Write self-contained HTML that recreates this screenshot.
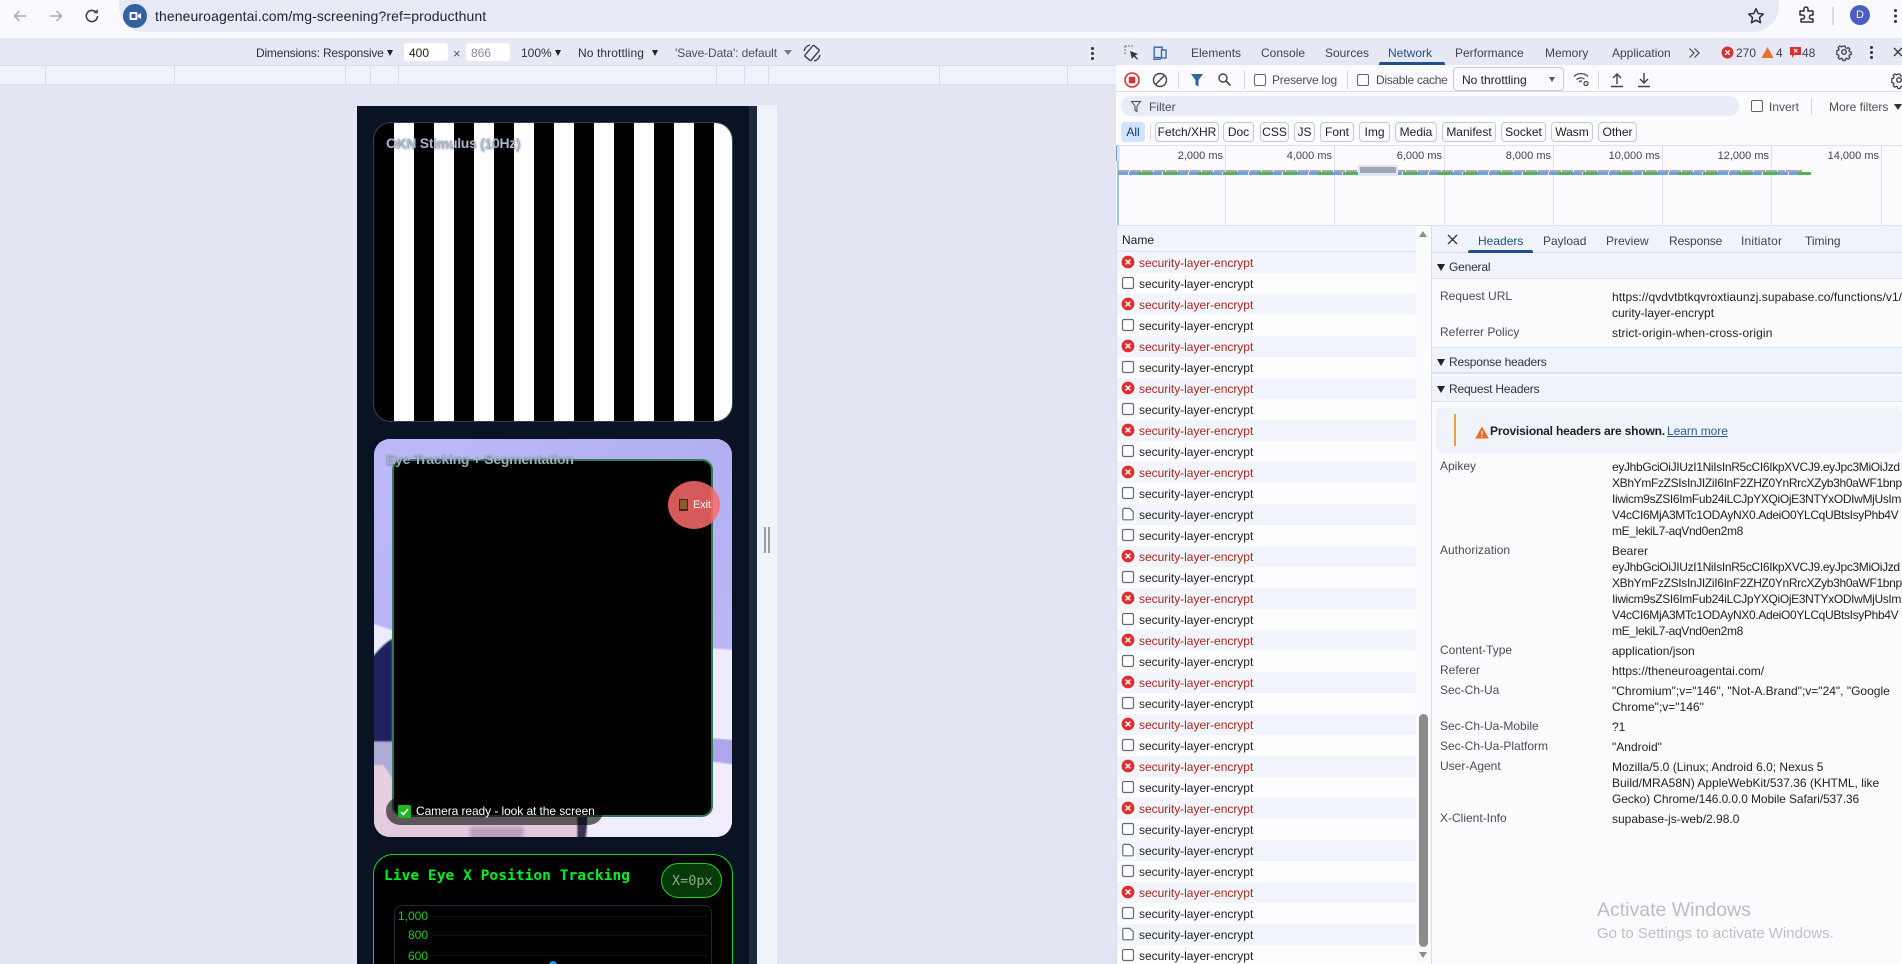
<!DOCTYPE html>
<html><head><meta charset="utf-8"><title>DevTools</title>
<style>
*{box-sizing:border-box}
html,body{margin:0;padding:0;width:1902px;height:964px;overflow:hidden;background:#e3e6f2;font:12px/16px "Liberation Sans",Arial,sans-serif;color:#1f1f1f}
#wrap{position:relative;width:1902px;height:964px;overflow:hidden}
.a{position:absolute}
.t{position:absolute;white-space:nowrap;font:12px/16px "Liberation Sans",Arial,sans-serif}
svg{position:absolute;overflow:visible}
.tab{color:#3c4350;top:45px}
.chip{position:absolute;top:122px;height:20px;border:1px solid #c7c9d3;border-radius:4px;background:#fbfbff;font-size:12px;line-height:18px;text-align:center;color:#1f1f1f;white-space:nowrap}
.ms{position:absolute;top:148px;font-size:11px;text-align:right;width:60px;color:#3c4350;line-height:16px}
.vl{position:absolute;top:145px;width:1px;height:80px;background:#dbe3f3}
.ml{position:absolute;top:65px;width:1px;height:20px;background:#d3def3}
#rows{position:absolute;left:1117px;top:252px;width:299px}
.r{position:relative;height:21px;background:#fdfdff;color:#1f1f1f;font-size:12px;line-height:23px;padding-left:22px;white-space:nowrap;letter-spacing:-.02px;overflow:hidden}
.r:nth-child(odd){background:#f2f5fb}
.r.e{color:#b3261e}
.r svg{left:4px;top:3px;width:14px;height:14px}
.lb{position:absolute;left:1440px;color:#474c55;white-space:nowrap;font-size:12px;line-height:16px}
.vv{position:absolute;left:1612px;width:290px;overflow:hidden;white-space:nowrap;font-size:12px;line-height:16px;color:#1f1f1f}
.tk{letter-spacing:-.34px}
.sec{position:absolute;left:1432px;width:470px;background:#f1f3fa;border-bottom:1px solid #d9e3f5;font-size:12px;color:#2d3340}
.sec span{position:absolute;left:17px;white-space:nowrap;letter-spacing:-.2px}
.sec i{position:absolute;left:5px;width:0;height:0;border-left:4px solid transparent;border-right:4px solid transparent;border-top:7px solid #222}
</style></head><body><div id="wrap">
<svg width="0" height="0" style="position:absolute"><defs>
<symbol id="err" viewBox="0 0 14 14"><circle cx="7" cy="7" r="6.4" fill="#dc2f2f"/><path d="M4.6 4.6l4.8 4.8M9.4 4.6l-4.8 4.8" stroke="#fff" stroke-width="1.5" fill="none"/></symbol>
<symbol id="box" viewBox="0 0 14 14"><rect x="1.5" y="1.5" width="11" height="11" rx="1.5" fill="#fff" stroke="#666b75" stroke-width="1.2"/></symbol>
<symbol id="doc" viewBox="0 0 14 14"><path d="M1.8 2.6a1.2 1.2 0 0 1 1.2-1.2h5.8l3.4 3.4v6.8a1.2 1.2 0 0 1-1.2 1.2H3a1.2 1.2 0 0 1-1.2-1.2z" fill="#fff" stroke="#666b75" stroke-width="1.2"/></symbol>
<filter id="bl"><feGaussianBlur stdDeviation="5"/></filter>
<filter id="bl2"><feGaussianBlur stdDeviation="2"/></filter>
</defs></svg>

<!-- chrome top -->
<div class="a" style="left:0;top:0;width:1902px;height:38px;background:#fafafe"></div>
<div class="a" style="left:119px;top:-20px;width:1660px;height:52px;border-radius:26px;background:#e7e9f5"></div>
<svg style="left:10px;top:6px" width="20" height="20" viewBox="0 0 20 20"><path d="M16 10H5M9.5 5L4.5 10l5 5" fill="none" stroke="#a8abb6" stroke-width="1.5"/></svg>
<svg style="left:46px;top:6px" width="20" height="20" viewBox="0 0 20 20"><path d="M4 10h11M10.5 5l5 5-5 5" fill="none" stroke="#a8abb6" stroke-width="1.5"/></svg>
<svg style="left:82px;top:6px" width="20" height="20" viewBox="0 0 20 20"><path d="M15.5 10a5.6 5.6 0 1 1-1.7-4" fill="none" stroke="#3e4249" stroke-width="1.6"/><path d="M15.8 3v4.2h-4.2z" fill="#3e4249"/></svg>
<svg style="left:123px;top:4px" width="24" height="24" viewBox="0 0 24 24"><circle cx="12" cy="12" r="12" fill="#33609f"/><rect x="6.5" y="8" width="8" height="8" rx="1.5" fill="#fff"/><path d="M15 11l3-2v6l-3-2z" fill="#fff"/><rect x="8.5" y="10" width="4" height="4" fill="#33609f"/></svg>
<div class="t" style="left:155px;top:7px;font-size:14px;line-height:18px;color:#1f2228;letter-spacing:.1px">theneuroagentai.com/mg-screening?ref=producthunt</div>
<svg style="left:1746px;top:6px" width="20" height="20" viewBox="0 0 20 20"><path d="M10 2.8l2.2 4.7 5.1.6-3.8 3.5 1 5.1L10 14.2l-4.5 2.5 1-5.1-3.8-3.5 5.1-.6z" fill="none" stroke="#2e3138" stroke-width="1.5" stroke-linejoin="round"/></svg>
<svg style="left:1797px;top:5px" width="20" height="20" viewBox="0 0 20 20"><path d="M3 7h4V5a2 2 0 0 1 4 0v2h5v4h-1.6a2 2 0 0 0 0 4H16v3H4v-3h1.5a2 2 0 0 0 0-4H3z" fill="none" stroke="#2e3138" stroke-width="1.5" stroke-linejoin="round" transform="translate(0 -1)"/></svg>
<div class="a" style="left:1832px;top:7px;width:2px;height:18px;background:#d6dcee"></div>
<div class="a" style="left:1850px;top:5px;width:20px;height:20px;border-radius:50%;background:#4a5fc1;color:#fff;font-size:11px;line-height:20px;text-align:center">D</div>
<div class="a" style="left:1894px;top:9px;width:3px;height:3px;border-radius:50%;background:#333;box-shadow:0 5.5px 0 #333,0 11px 0 #333"></div>

<!-- device toolbar -->
<div class="a" style="left:0;top:38px;width:1116px;height:27px;background:#e6e9f4"></div>
<div class="a" style="left:0;top:65px;width:1116px;height:20px;background:#f0f2fa;border-top:1px solid #d3def3;border-bottom:1px solid #d8e0f2"></div>
<div class="ml" style="left:45px"></div><div class="ml" style="left:174px"></div><div class="ml" style="left:345px"></div><div class="ml" style="left:370px"></div><div class="ml" style="left:398px"></div><div class="ml" style="left:716px"></div><div class="ml" style="left:744px"></div><div class="ml" style="left:768px"></div><div class="ml" style="left:939px"></div><div class="ml" style="left:1067px"></div>
<div class="t" style="left:256px;top:45px;color:#2d3138;letter-spacing:-.2px">Dimensions: Responsive</div>
<div class="a" style="left:387px;top:50px;border-left:3.5px solid transparent;border-right:3.5px solid transparent;border-top:6px solid #222"></div>
<div class="a" style="left:404px;top:43px;width:44px;height:18px;background:#fff;border-radius:3px"></div>
<div class="t" style="left:409px;top:45px;color:#1f1f1f">400</div>
<div class="t" style="left:453px;top:46px;color:#555;font-size:13px">×</div>
<div class="a" style="left:466px;top:43px;width:44px;height:18px;background:#fff;border-radius:3px"></div>
<div class="t" style="left:471px;top:45px;color:#8a8d96">866</div>
<div class="t" style="left:521px;top:45px;color:#2d3138">100%</div>
<div class="a" style="left:555px;top:50px;border-left:3.5px solid transparent;border-right:3.5px solid transparent;border-top:6px solid #222"></div>
<div class="t" style="left:578px;top:45px;color:#2d3138;letter-spacing:.1px">No throttling</div>
<div class="a" style="left:652px;top:50px;border-left:3.5px solid transparent;border-right:3.5px solid transparent;border-top:6px solid #222"></div>
<div class="t" style="left:675px;top:45px;color:#4a4e57;letter-spacing:-.1px">'Save-Data': default</div>
<div class="a" style="left:784px;top:50px;border-left:4px solid transparent;border-right:4px solid transparent;border-top:5px solid #777"></div>
<svg style="left:802px;top:43px" width="20" height="20" viewBox="0 0 20 20"><g fill="none" stroke="#3e4249" stroke-width="1.4"><rect x="6" y="3" width="8" height="14" rx="1" transform="rotate(40 10 10)"/><path d="M2 8a8 8 0 0 1 6-6M18 12a8 8 0 0 1-6 6"/></g></svg>
<div class="a" style="left:1091px;top:47px;width:3px;height:3px;border-radius:50%;background:#333;box-shadow:0 5px 0 #333,0 10px 0 #333"></div>

<!-- page viewport -->
<div class="a" style="left:357px;top:106px;width:400px;height:858px;background:#0a1324"></div>
<div class="a" style="left:749px;top:106px;width:8px;height:858px;background:#1e293d"></div>
<div class="a" style="left:757px;top:105px;width:20px;height:859px;background:#f1f3fa"></div>
<div class="a" style="left:764px;top:527px;width:2px;height:26px;background:#9a9ca3"></div>
<div class="a" style="left:768px;top:527px;width:2px;height:26px;background:#9a9ca3"></div>

<!-- card1 -->
<div class="a" style="left:373px;top:122px;width:360px;height:300px;border-radius:18px;overflow:hidden;border:1px solid #3a4252;background:#000">
 <div class="a" style="left:20px;top:0;width:340px;height:300px;background:repeating-linear-gradient(90deg,#fff 0 20px,#000 20px 40px)"></div>
</div>
<div class="t" style="left:386px;top:135px;font-size:14px;font-weight:bold;color:#a9b6cc;letter-spacing:-.3px;text-shadow:0 1px 2px rgba(0,0,0,.5)">OKN Stimulus (10Hz)</div>

<!-- card2 -->
<div class="a" style="left:374px;top:439px;width:358px;height:398px;border-radius:16px;overflow:hidden;background:#b6b2f6">
<svg style="left:-24px;top:-9px" width="450" height="420" viewBox="0 0 1350 1260">
<defs><linearGradient id="lav" x1="0" y1="0" x2="1" y2="1"><stop offset="0" stop-color="#bdb9f9"/><stop offset=".5" stop-color="#b2aff2"/><stop offset="1" stop-color="#c4bff8"/></linearGradient></defs>
<rect x="60" y="0" width="1100" height="1260" fill="url(#lav)"/>
<g filter="url(#bl2)">
<path d="M60 578L127 600V640L60 690Z" fill="#eeeaff"/>
<path d="M60 690C90 650 110 635 127 625V945H60Z" fill="#1f2160"/>
<path d="M60 935H127V1060L100 1010L60 1010Z" fill="#aeaad6"/>
<path d="M60 1005L100 1005L127 1045V1240H60Z" fill="#e6cfe0"/>
<path d="M1085 655L1160 660V935L1085 930Z" fill="#efecfd"/>
<path d="M1085 925L1160 930V1005L1085 995Z" fill="#aca6ea"/>
<path d="M1085 995L1160 1005V1240H1085Z" fill="#f1edfd"/>
<rect x="60" y="1150" width="640" height="90" fill="#e3cadc"/>
</g>
<rect x="360" y="1190" width="160" height="50" fill="#bfa0bc" filter="url(#bl)"/>
<path d="M682 1150H715L705 1230H682Z" fill="#3a3050" filter="url(#bl2)"/>
<rect x="712" y="1150" width="380" height="90" fill="#f1edfd"/>
</svg>
<div class="a" style="left:18px;top:20px;width:321px;height:358px;background:#000;border:2px solid #2f7a5a;border-radius:11px"></div>
<div class="t" style="left:12px;top:12px;font-size:14px;font-weight:bold;color:#9fb0c4;letter-spacing:-.27px;text-shadow:0 1px 2px rgba(0,0,0,.4)">Eye Tracking + Segmentation</div>
<div class="a" style="left:12px;top:358px;width:217px;height:28px;border-radius:14px;background:rgba(0,0,0,.58)"></div>
<div class="a" style="left:24px;top:366px;width:13px;height:13px;background:#16b81a;border-radius:1px"></div>
<svg style="left:24px;top:366px" width="13" height="13" viewBox="0 0 13 13"><path d="M3 7l2.4 2.4L10 4" fill="none" stroke="#fff" stroke-width="1.7"/></svg>
<div class="t" style="left:42px;top:364px;font-size:12px;color:#fff;letter-spacing:-.08px">Camera ready - look at the screen</div>
<div class="a" style="left:294px;top:42px;width:52px;height:48px;border-radius:50%;background:rgba(252,106,106,.85)"></div>
<div class="a" style="left:305px;top:60px;width:9px;height:12px;background:#8a5a2c;border:1px solid #3d2a1a;border-bottom-width:2px"></div>
<div class="t" style="left:319px;top:58px;font-size:11px;color:#fff;letter-spacing:-.1px">Exit</div>
</div>

<!-- chart card -->
<div class="a" style="left:373px;top:854px;width:360px;height:130px;border-radius:20px;background:#000;border:1.5px solid #1fd01f"></div>
<div class="t" style="left:384px;top:867px;font:bold 14.6px/18px 'DejaVu Sans Mono','Liberation Mono',monospace;color:#00f020">Live Eye X Position Tracking</div>
<div class="a" style="left:661px;top:863px;width:61px;height:35px;border-radius:18px;background:#063a08;border:1.5px solid #1fd01f"></div>
<div class="t" style="left:672px;top:872px;font:13.5px/18px 'DejaVu Sans Mono','Liberation Mono',monospace;color:#8eaa90">X=0px</div>
<div class="a" style="left:394px;top:905px;width:318px;height:80px;border:1px solid #1e293b;border-radius:8px"></div>
<div class="a" style="left:432px;top:916px;width:276px;height:1px;background:#071807"></div>
<div class="a" style="left:432px;top:935px;width:276px;height:1px;background:#071807"></div>
<div class="a" style="left:432px;top:955px;width:276px;height:1px;background:#071807"></div>
<div class="t" style="left:388px;width:40px;text-align:right;top:908px;color:#18cc18">1,000</div>
<div class="t" style="left:388px;width:40px;text-align:right;top:927px;color:#18cc18">800</div>
<div class="t" style="left:388px;width:40px;text-align:right;top:948px;color:#18cc18">600</div>
<div class="a" style="left:549px;top:961px;width:8px;height:8px;border-radius:50%;background:#2196f3"></div>

<!-- devtools -->
<div class="a" style="left:1116px;top:38px;width:786px;height:926px;background:#fcfcff"></div>
<div class="a" style="left:1116px;top:38px;width:786px;height:27px;background:#e6e9f4"></div>
<svg style="left:1124px;top:45px" width="16" height="16" viewBox="0 0 16 16"><path d="M1 1h9M1 1v9" fill="none" stroke="#555" stroke-dasharray="1.6 1.6"/><path d="M6 6l8 3-3 1.5L14 14l-.8.8-3.4-3.4L8 14z" fill="#333"/></svg>
<svg style="left:1152px;top:45px" width="16" height="16" viewBox="0 0 16 16"><g fill="none" stroke="#2f64a8" stroke-width="1.3"><path d="M9.5 12.5H2.2V2.2h8V5"/><rect x="9.5" y="5" width="4.5" height="8"/><path d="M1 14.2h8"/></g></svg>
<div class="t tab" style="left:1191px">Elements</div>
<div class="t tab" style="left:1261px">Console</div>
<div class="t tab" style="left:1325px">Sources</div>
<div class="t tab" style="left:1388px;color:#1f4f8f">Network</div>
<div class="a" style="left:1379px;top:62px;width:66px;height:3px;background:#1f4f8f;border-radius:2px 2px 0 0"></div>
<div class="t tab" style="left:1455px">Performance</div>
<div class="t tab" style="left:1545px">Memory</div>
<div class="t tab" style="left:1612px">Application</div>
<svg style="left:1688px;top:47px" width="12" height="12" viewBox="0 0 12 12"><path d="M1.5 1.5L6 6l-4.5 4.5M6.5 1.5L11 6l-4.5 4.5" fill="none" stroke="#444" stroke-width="1.2"/></svg>
<svg style="left:1721px;top:46px;width:13px;height:13px"><use href="#err" width="13" height="13"/></svg>
<div class="t" style="left:1736px;top:45px;color:#3c4350">270</div>
<svg style="left:1761px;top:46px" width="13" height="13" viewBox="0 0 13 13"><path d="M6.5 1L12.5 12H.5z" fill="#e8702a"/></svg>
<div class="t" style="left:1776px;top:45px;color:#3c4350">4</div>
<svg style="left:1790px;top:47px" width="11" height="11" viewBox="0 0 11 11"><path d="M0 0h11v8H4l-2 3V8H0z" fill="#dc2f2f"/><path d="M4 2l3.4 3.4M7.4 2L4 5.4" stroke="#fff" stroke-width="1"/></svg>
<div class="t" style="left:1802px;top:45px;color:#3c4350">48</div>
<svg style="left:1836px;top:44px" width="16" height="16" viewBox="0 0 16 16"><g fill="none" stroke="#3e4249" stroke-width="1.4"><circle cx="8" cy="8" r="2.3"/><path d="M6.7 1.5h2.6l.4 1.9 1.3.6 1.7-1 1.8 1.8-1 1.7.6 1.3 1.9.4v2.6l-1.9.4-.6 1.3 1 1.7-1.8 1.8-1.7-1-1.3.6-.4 1.9H6.7l-.4-1.9-1.3-.6-1.7 1-1.8-1.8 1-1.7-.6-1.3-1.9-.4V6.5l1.9-.4.6-1.3-1-1.7L3.3 1.300l1.700 1 1.300-.6z" transform="translate(.8 .8) scale(.9)"/></g></svg>
<div class="a" style="left:1870px;top:46px;width:3px;height:3px;border-radius:50%;background:#333;box-shadow:0 5px 0 #333,0 10px 0 #333"></div>
<svg style="left:1893px;top:47px" width="10" height="10" viewBox="0 0 10 10"><path d="M1 1l8 8M9 1L1 9" stroke="#333" stroke-width="1.3"/></svg>

<!-- network toolbar -->
<div class="a" style="left:1116px;top:65px;width:786px;height:27px;background:#fbfbff;border-bottom:1px solid #d6e0f3"></div>
<svg style="left:1124px;top:72px" width="16" height="16" viewBox="0 0 16 16"><circle cx="8" cy="8" r="7" fill="none" stroke="#dc2f2f" stroke-width="1.5"/><rect x="4.8" y="4.8" width="6.4" height="6.4" rx="1" fill="#dc2f2f"/></svg>
<svg style="left:1152px;top:72px" width="16" height="16" viewBox="0 0 16 16"><circle cx="8" cy="8" r="6.5" fill="none" stroke="#444" stroke-width="1.4"/><path d="M12.5 3.5l-9 9" stroke="#444" stroke-width="1.4"/></svg>
<div class="a" style="left:1178px;top:71px;width:1px;height:18px;background:#d5d8e2"></div>
<svg style="left:1190px;top:73px" width="14" height="14" viewBox="0 0 14 14"><path d="M1 1h12L8.5 7v6.5l-3-1.5V7z" fill="#2f64a8"/></svg>
<svg style="left:1217px;top:72px" width="15" height="15" viewBox="0 0 15 15"><circle cx="6" cy="6" r="4" fill="none" stroke="#444" stroke-width="1.4"/><path d="M9 9l4.5 4.5" stroke="#444" stroke-width="1.6"/></svg>
<div class="a" style="left:1244px;top:71px;width:1px;height:18px;background:#d5d8e2"></div>
<div class="a" style="left:1254px;top:74px;width:12px;height:12px;border:1px solid #5f636b;border-radius:2px;background:#fff"></div>
<div class="t" style="left:1272px;top:72px;color:#4a4e57;letter-spacing:-.2px">Preserve log</div>
<div class="a" style="left:1347px;top:71px;width:1px;height:18px;background:#d5d8e2"></div>
<div class="a" style="left:1357px;top:74px;width:12px;height:12px;border:1px solid #5f636b;border-radius:2px;background:#fff"></div>
<div class="t" style="left:1376px;top:72px;color:#4a4e57;letter-spacing:-.3px">Disable cache</div>
<div class="a" style="left:1453px;top:67px;width:111px;height:24px;border:1px solid #c7c9d3;border-radius:4px;background:#fbfbff"></div>
<div class="t" style="left:1462px;top:72px;color:#1f1f1f">No throttling</div>
<div class="a" style="left:1549px;top:77px;border-left:3.5px solid transparent;border-right:3.5px solid transparent;border-top:5px solid #555"></div>
<svg style="left:1573px;top:71px" width="17" height="17" viewBox="0 0 17 17"><g fill="none" stroke="#444" stroke-width="1.3"><path d="M1 5.5a10 10 0 0 1 14 0M3.5 8.5a6.5 6.5 0 0 1 8 -.5M6 11a3 3 0 0 1 3-.8"/><circle cx="13" cy="12.5" r="2"/></g></svg>
<div class="a" style="left:1598px;top:71px;width:1px;height:18px;background:#d5d8e2"></div>
<svg style="left:1610px;top:72px" width="14" height="16" viewBox="0 0 14 16"><path d="M7 12V2M3 6l4-4 4 4M1 14.5h12" fill="none" stroke="#3e4249" stroke-width="1.4"/></svg>
<svg style="left:1637px;top:72px" width="14" height="16" viewBox="0 0 14 16"><path d="M7 1v10M3 7l4 4 4-4M1 14.5h12" fill="none" stroke="#3e4249" stroke-width="1.4"/></svg>
<svg style="left:1891px;top:72px" width="16" height="16" viewBox="0 0 16 16"><g fill="none" stroke="#3e4249" stroke-width="1.4"><circle cx="8" cy="8" r="2.3"/><path d="M6.7 1.5h2.6l.4 1.9 1.3.6 1.7-1 1.8 1.8-1 1.7.6 1.3 1.9.4v2.6l-1.9.4-.6 1.3 1 1.7-1.8 1.8-1.7-1-1.3.6-.4 1.9H6.7l-.4-1.9-1.3-.6-1.7 1-1.8-1.8 1-1.7-.6-1.3-1.9-.4V6.5l1.900-.4.6-1.300-1-1.7L3.300 1.300l1.700 1 1.300-.6z" transform="translate(.8 .8) scale(.9)"/></g></svg>

<!-- filter -->
<div class="a" style="left:1121px;top:96px;width:618px;height:20px;border-radius:10px;background:#e9ecf6"></div>
<svg style="left:1131px;top:101px" width="10" height="11" viewBox="0 0 10 11"><path d="M.5.5h9L6 5v5.5L4 9.5V5z" fill="none" stroke="#444" stroke-width="1"/></svg>
<div class="t" style="left:1149px;top:99px;color:#4a4e57">Filter</div>
<div class="a" style="left:1751px;top:100px;width:12px;height:12px;border:1px solid #5f636b;border-radius:2px;background:#fff"></div>
<div class="t" style="left:1769px;top:99px;color:#4a4e57">Invert</div>
<div class="a" style="left:1811px;top:98px;width:1px;height:17px;background:#d5d8e2"></div>
<div class="t" style="left:1829px;top:99px;color:#4a4e57">More filters</div>
<div class="a" style="left:1894px;top:104px;border-left:4px solid transparent;border-right:4px solid transparent;border-top:6px solid #333"></div>
<div class="chip" style="left:1121px;width:24px;background:#d3e3fd;border-color:#d3e3fd;color:#0b3a75">All</div>
<div class="a" style="left:1150px;top:124px;width:1px;height:16px;background:#d5d8e2"></div>
<div class="chip" style="left:1155px;width:64px">Fetch/XHR</div>
<div class="chip" style="left:1223px;width:31px">Doc</div>
<div class="chip" style="left:1260px;width:29px">CSS</div>
<div class="chip" style="left:1294px;width:21px">JS</div>
<div class="chip" style="left:1320px;width:34px">Font</div>
<div class="chip" style="left:1359px;width:31px">Img</div>
<div class="chip" style="left:1395px;width:42px">Media</div>
<div class="chip" style="left:1442px;width:54px">Manifest</div>
<div class="chip" style="left:1501px;width:45px">Socket</div>
<div class="chip" style="left:1551px;width:42px">Wasm</div>
<div class="chip" style="left:1598px;width:39px">Other</div>

<!-- overview -->
<div class="a" style="left:1116px;top:145px;width:786px;height:1px;background:#dbe3f3"></div>
<div class="a" style="left:1116px;top:225px;width:786px;height:1px;background:#d5dff2"></div>
<div class="a" style="left:1117px;top:145px;width:2px;height:80px;background:#a9c4f2"></div>
<div class="a" style="left:1116px;top:146px;width:4px;height:15px;background:#dbe6fa;border-left:1px solid #6f98e0"></div>
<div class="vl" style="left:1225px"></div><div class="vl" style="left:1334px"></div><div class="vl" style="left:1444px"></div><div class="vl" style="left:1553px"></div><div class="vl" style="left:1662px"></div><div class="vl" style="left:1771px"></div><div class="vl" style="left:1881px"></div>
<div class="ms" style="left:1163px">2,000 ms</div><div class="ms" style="left:1272px">4,000 ms</div><div class="ms" style="left:1382px">6,000 ms</div><div class="ms" style="left:1491px">8,000 ms</div><div class="ms" style="left:1600px">10,000 ms</div><div class="ms" style="left:1709px">12,000 ms</div><div class="ms" style="left:1819px">14,000 ms</div>
<div class="a" style="left:1118px;top:170px;width:680px;height:2px;background:repeating-linear-gradient(90deg,#a5a9b3 0 11px,#fbfbff 11px 12px)"></div>
<div class="a" style="left:1118px;top:172px;width:693px;height:3px;background:repeating-linear-gradient(90deg,#6d9fe8 0 10px,#fff 10px 11px,#6d9fe8 11px 20px,#55b25a 20px 34px,#6d9fe8 34px 44px,#fff 44px 45px,#55b25a 45px 60px)"></div>
<div class="a" style="left:1358px;top:165px;width:40px;height:11px;background:#dce6f8"></div>
<div class="a" style="left:1360px;top:167px;width:36px;height:6px;background:#a3a6b1"></div>
<div class="a" style="left:1785px;top:170px;width:20px;height:2px;background:#fbfbff"></div>
<div class="a" style="left:1786px;top:170px;width:16px;height:2px;background:#a5a9b3"></div>

<!-- name col -->
<div class="a" style="left:1117px;top:226px;width:299px;height:26px;background:#f2f4fb;border-bottom:1px solid #d6e0f3"></div>
<div class="t" style="left:1122px;top:232px;color:#1f1f1f">Name</div>
<div class="a" style="left:1419px;top:231px;border-left:4px solid transparent;border-right:4px solid transparent;border-bottom:6px solid #8c8c8c"></div>
<div class="a" style="left:1116px;top:226px;width:1px;height:738px;background:#d5dff2"></div>
<div id="rows">
<div class="r e"><svg><use href="#err"/></svg>security-layer-encrypt</div>
<div class="r"><svg><use href="#box"/></svg>security-layer-encrypt</div>
<div class="r e"><svg><use href="#err"/></svg>security-layer-encrypt</div>
<div class="r"><svg><use href="#box"/></svg>security-layer-encrypt</div>
<div class="r e"><svg><use href="#err"/></svg>security-layer-encrypt</div>
<div class="r"><svg><use href="#box"/></svg>security-layer-encrypt</div>
<div class="r e"><svg><use href="#err"/></svg>security-layer-encrypt</div>
<div class="r"><svg><use href="#box"/></svg>security-layer-encrypt</div>
<div class="r e"><svg><use href="#err"/></svg>security-layer-encrypt</div>
<div class="r"><svg><use href="#box"/></svg>security-layer-encrypt</div>
<div class="r e"><svg><use href="#err"/></svg>security-layer-encrypt</div>
<div class="r"><svg><use href="#box"/></svg>security-layer-encrypt</div>
<div class="r"><svg><use href="#doc"/></svg>security-layer-encrypt</div>
<div class="r"><svg><use href="#box"/></svg>security-layer-encrypt</div>
<div class="r e"><svg><use href="#err"/></svg>security-layer-encrypt</div>
<div class="r"><svg><use href="#box"/></svg>security-layer-encrypt</div>
<div class="r e"><svg><use href="#err"/></svg>security-layer-encrypt</div>
<div class="r"><svg><use href="#box"/></svg>security-layer-encrypt</div>
<div class="r e"><svg><use href="#err"/></svg>security-layer-encrypt</div>
<div class="r"><svg><use href="#box"/></svg>security-layer-encrypt</div>
<div class="r e"><svg><use href="#err"/></svg>security-layer-encrypt</div>
<div class="r"><svg><use href="#box"/></svg>security-layer-encrypt</div>
<div class="r e"><svg><use href="#err"/></svg>security-layer-encrypt</div>
<div class="r"><svg><use href="#box"/></svg>security-layer-encrypt</div>
<div class="r e"><svg><use href="#err"/></svg>security-layer-encrypt</div>
<div class="r"><svg><use href="#box"/></svg>security-layer-encrypt</div>
<div class="r e"><svg><use href="#err"/></svg>security-layer-encrypt</div>
<div class="r"><svg><use href="#box"/></svg>security-layer-encrypt</div>
<div class="r"><svg><use href="#doc"/></svg>security-layer-encrypt</div>
<div class="r"><svg><use href="#box"/></svg>security-layer-encrypt</div>
<div class="r e"><svg><use href="#err"/></svg>security-layer-encrypt</div>
<div class="r"><svg><use href="#box"/></svg>security-layer-encrypt</div>
<div class="r"><svg><use href="#doc"/></svg>security-layer-encrypt</div>
<div class="r"><svg><use href="#box"/></svg>security-layer-encrypt</div>
</div>
<div class="a" style="left:1419px;top:714px;width:9px;height:233px;background:#8c8c8c;border-radius:5px"></div>
<div class="a" style="left:1419px;top:952px;border-left:4px solid transparent;border-right:4px solid transparent;border-top:6px solid #8c8c8c"></div>

<!-- right panel -->
<div class="a" style="left:1431px;top:226px;width:1px;height:738px;background:#d5dff2"></div>
<div class="a" style="left:1432px;top:226px;width:470px;height:27px;background:#f1f3fa;border-bottom:1px solid #d6e0f3"></div>
<svg style="left:1447px;top:234px" width="11" height="11" viewBox="0 0 11 11"><path d="M1 1l9 9M10 1l-9 9" stroke="#333" stroke-width="1.3"/></svg>
<div class="t" style="left:1478px;top:233px;color:#1f4f8f">Headers</div>
<div class="a" style="left:1468px;top:250px;width:65px;height:3px;background:#1f4f8f;border-radius:2px 2px 0 0"></div>
<div class="t" style="left:1543px;top:233px;color:#3c4350">Payload</div>
<div class="t" style="left:1606px;top:233px;color:#3c4350">Preview</div>
<div class="t" style="left:1669px;top:233px;color:#3c4350;letter-spacing:-.1px">Response</div>
<div class="t" style="left:1741px;top:233px;color:#3c4350;letter-spacing:.2px">Initiator</div>
<div class="t" style="left:1805px;top:233px;color:#3c4350">Timing</div>

<div class="sec" style="top:253px;height:26px"><i style="top:11px"></i><span style="top:6px">General</span></div>
<div class="lb" style="top:288px">Request URL</div>
<div class="vv" style="top:289px;letter-spacing:.06px">https://qvdvtbtkqvroxtiaunzj.supabase.co/functions/v1/se</div>
<div class="vv" style="top:305px">curity-layer-encrypt</div>
<div class="lb" style="top:324px">Referrer Policy</div>
<div class="vv" style="top:325px;letter-spacing:.1px">strict-origin-when-cross-origin</div>
<div class="a" style="left:1432px;top:347px;width:470px;height:1px;background:#d9e3f5"></div>
<div class="sec" style="top:348px;height:26px;border-bottom:2px solid #d9e3f5"><i style="top:11px"></i><span style="top:6px">Response headers</span></div>
<div class="sec" style="top:376px;height:26px"><i style="top:10px"></i><span style="top:5px">Request Headers</span></div>
<div class="a" style="left:1436px;top:407px;width:466px;height:46px;background:#f1f3fa;border-radius:6px"></div>
<div class="a" style="left:1454px;top:414px;width:2px;height:32px;background:#e8a33a"></div>
<svg style="left:1475px;top:426px" width="14" height="13" viewBox="0 0 14 13"><path d="M7 .5L13.8 12.5H.2z" fill="#e8702a"/><path d="M7 5v4M7 10v1.2" stroke="#fff" stroke-width="1"/></svg>
<div class="t" style="left:1490px;top:423px;font-weight:bold;color:#1f1f1f;letter-spacing:-.17px">Provisional headers are shown.</div>
<div class="t" style="left:1667px;top:423px;color:#2b5c9e;text-decoration:underline;letter-spacing:-.05px">Learn more</div>

<div class="lb" style="top:458px">Apikey</div>
<div class="vv tk" style="top:459px">eyJhbGciOiJIUzI1NiIsInR5cCI6IkpXVCJ9.eyJpc3MiOiJzd</div>
<div class="vv tk" style="top:475px">XBhYmFzZSIsInJIZiI6InF2ZHZ0YnRrcXZyb3h0aWF1bnpqI</div>
<div class="vv tk" style="top:491px">Iiwicm9sZSI6ImFub24iLCJpYXQiOjE3NTYxODIwMjUsIm</div>
<div class="vv tk" style="top:507px">V4cCI6MjA3MTc1ODAyNX0.AdeiO0YLCqUBtsIsyPhb4V</div>
<div class="vv tk" style="top:523px">mE_lekiL7-aqVnd0en2m8</div>
<div class="lb" style="top:542px">Authorization</div>
<div class="vv" style="top:543px">Bearer</div>
<div class="vv tk" style="top:559px">eyJhbGciOiJIUzI1NiIsInR5cCI6IkpXVCJ9.eyJpc3MiOiJzd</div>
<div class="vv tk" style="top:575px">XBhYmFzZSIsInJIZiI6InF2ZHZ0YnRrcXZyb3h0aWF1bnpqI</div>
<div class="vv tk" style="top:591px">Iiwicm9sZSI6ImFub24iLCJpYXQiOjE3NTYxODIwMjUsIm</div>
<div class="vv tk" style="top:607px">V4cCI6MjA3MTc1ODAyNX0.AdeiO0YLCqUBtsIsyPhb4V</div>
<div class="vv tk" style="top:623px">mE_lekiL7-aqVnd0en2m8</div>
<div class="lb" style="top:642px">Content-Type</div>
<div class="vv" style="top:643px">application/json</div>
<div class="lb" style="top:662px">Referer</div>
<div class="vv" style="top:663px">https://theneuroagentai.com/</div>
<div class="lb" style="top:682px">Sec-Ch-Ua</div>
<div class="vv" style="top:683px">"Chromium";v="146", "Not-A.Brand";v="24", "Google</div>
<div class="vv" style="top:699px">Chrome";v="146"</div>
<div class="lb" style="top:718px">Sec-Ch-Ua-Mobile</div>
<div class="vv" style="top:719px">?1</div>
<div class="lb" style="top:738px">Sec-Ch-Ua-Platform</div>
<div class="vv" style="top:739px">"Android"</div>
<div class="lb" style="top:758px">User-Agent</div>
<div class="vv" style="top:759px">Mozilla/5.0 (Linux; Android 6.0; Nexus 5</div>
<div class="vv" style="top:775px">Build/MRA58N) AppleWebKit/537.36 (KHTML, like</div>
<div class="vv" style="top:791px;letter-spacing:-.1px">Gecko) Chrome/146.0.0.0 Mobile Safari/537.36</div>
<div class="lb" style="top:810px">X-Client-Info</div>
<div class="vv" style="top:811px">supabase-js-web/2.98.0</div>

<div class="t" style="left:1597px;top:898px;font-size:19.5px;line-height:24px;color:#b9bcc5">Activate Windows</div>
<div class="t" style="left:1597px;top:925px;font-size:15px;line-height:18px;color:#bcbfc8">Go to Settings to activate Windows.</div>
</div></body></html>
